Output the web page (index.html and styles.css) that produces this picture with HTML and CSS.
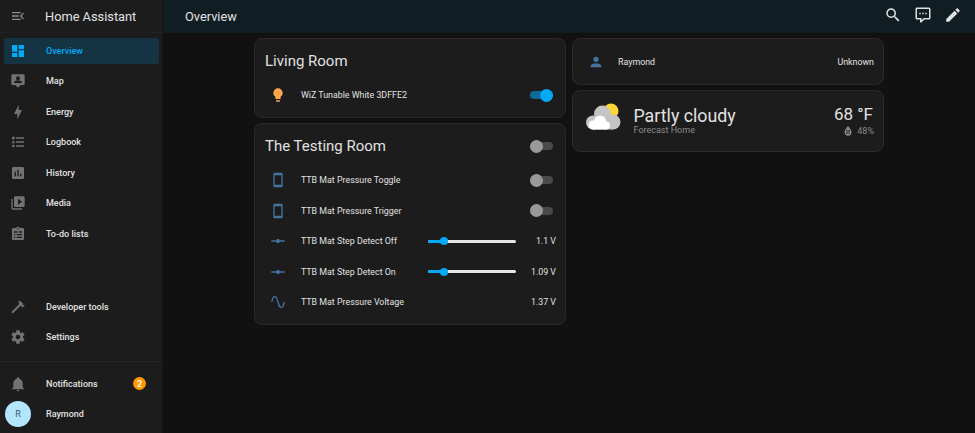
FILE: index.html
```html
<!DOCTYPE html>
<html lang="en">
  <head>
    <meta charset="UTF-8" />
    <title>Overview - Home Assistant</title>
    <link rel="stylesheet" href="styles.css">
  </head>
  <body>
    <aside class="sidebar">
      <div class="brand">
        <svg class="icon" viewBox="0 0 24 24"><path d="M21,15.61L19.59,17L14.58,12L19.59,7L21,8.39L17.44,12L21,15.61M3,6H16V8H3V6M3,13V11H13V13H3M3,18V16H16V18H3Z"/></svg>
        <span class="brand-name">Home Assistant</span>
      </div>
      <nav class="nav-main">
        <a class="nav-item active"><svg class="icon" viewBox="0 0 24 24"><path d="M13,3V9H21V3M13,21H21V11H13M3,21H11V15H3M3,13H11V3H3V13Z"/></svg><span>Overview</span></a>
        <a class="nav-item"><svg class="icon" viewBox="0 0 24 24"><path d="M20 2H4C2.9 2 2 2.9 2 4V16C2 17.1 2.9 18 4 18H8L12 22L16 18H20C21.1 18 22 17.1 22 16V4C22 2.9 21.1 2 20 2M12 5C13.66 5 15 6.34 15 8C15 9.66 13.66 11 12 11C10.34 11 9 9.66 9 8C9 6.34 10.34 5 12 5M18 15H6V14C6 12 10 10.9 12 10.9C14 10.9 18 12 18 14V15Z"/></svg><span>Map</span></a>
        <a class="nav-item"><svg class="icon" viewBox="0 0 24 24"><path d="M11 15H6L13 1V9H18L11 23V15Z"/></svg><span>Energy</span></a>
        <a class="nav-item"><svg class="icon" viewBox="0 0 24 24"><path d="M5,9.5L7.5,14H2.5L5,9.5M3,4H7V8H3V4M5,20A2,2 0 0,0 7,18A2,2 0 0,0 5,16A2,2 0 0,0 3,18A2,2 0 0,0 5,20M9,5V7H21V5H9M9,19H21V17H9V19M9,13H21V11H9V13Z"/></svg><span>Logbook</span></a>
        <a class="nav-item"><svg class="icon" viewBox="0 0 24 24"><path d="M9 17H7V10H9V17M13 17H11V7H13V17M17 17H15V13H17V17M19 3H5C3.9 3 3 3.9 3 5V19C3 20.1 3.9 21 5 21H19C20.1 21 21 20.1 21 19V5C21 3.9 20.1 3 19 3Z"/></svg><span>History</span></a>
        <a class="nav-item"><svg class="icon" viewBox="0 0 24 24"><path d="M4,6H2V20A2,2 0 0,0 4,22H18V20H4V6M20,2H8A2,2 0 0,0 6,4V16A2,2 0 0,0 8,18H20A2,2 0 0,0 22,16V4A2,2 0 0,0 20,2M12,14.5V5.5L18,10L12,14.5Z"/></svg><span>Media</span></a>
        <a class="nav-item"><svg class="icon" viewBox="0 0 24 24"><path fill-rule="evenodd" d="M19,3H14.82C14.4,1.84 13.3,1 12,1C10.7,1 9.6,1.84 9.18,3H5A2,2 0 0,0 3,5V19A2,2 0 0,0 5,21H19A2,2 0 0,0 21,19V5A2,2 0 0,0 19,3M12,3A1,1 0 0,1 13,4A1,1 0 0,1 12,5A1,1 0 0,1 11,4A1,1 0 0,1 12,3M6,8V10H11V8H6M13,8V10H18V8H13M6,12V14H8V12H6M10,12V14H18V12H10M6,16V18H8V16H6M10,16V18H18V16H10Z"/></svg><span>To-do lists</span></a>
      </nav>
      <nav class="nav-tools">
        <a class="nav-item"><svg class="icon" viewBox="0 0 24 24"><path d="M2 19.63L13.43 8.2L12.72 7.5L14.14 6.07L12 3.89C13.2 2.7 15.09 2.7 16.27 3.89L19.87 7.5L18.45 8.91H21.29L22 9.62L18.45 13.21L17.74 12.5V9.62L16.27 11.04L15.56 10.33L4.13 21.76L2 19.63Z"/></svg><span>Developer tools</span></a>
        <a class="nav-item"><svg class="icon" viewBox="0 0 24 24"><path d="M12,15.5A3.5,3.5 0 0,1 8.5,12A3.5,3.5 0 0,1 12,8.5A3.5,3.5 0 0,1 15.5,12A3.5,3.5 0 0,1 12,15.5M19.43,12.97C19.47,12.65 19.5,12.33 19.5,12C19.5,11.67 19.47,11.34 19.43,11L21.54,9.37C21.73,9.22 21.78,8.95 21.66,8.73L19.66,5.27C19.54,5.05 19.27,4.96 19.05,5.05L16.56,6.05C16.04,5.66 15.5,5.32 14.87,5.07L14.5,2.42C14.46,2.18 14.25,2 14,2H10C9.75,2 9.54,2.18 9.5,2.42L9.13,5.07C8.5,5.32 7.96,5.66 7.44,6.05L4.95,5.05C4.73,4.96 4.46,5.05 4.34,5.27L2.34,8.73C2.21,8.95 2.27,9.22 2.46,9.37L4.57,11C4.53,11.34 4.5,11.67 4.5,12C4.5,12.33 4.53,12.65 4.57,12.97L2.46,14.63C2.27,14.78 2.21,15.05 2.34,15.27L4.34,18.73C4.46,18.95 4.73,19.03 4.95,18.95L7.44,17.94C7.96,18.34 8.5,18.68 9.13,18.93L9.5,21.58C9.54,21.82 9.75,22 10,22H14C14.25,22 14.46,21.82 14.5,21.58L14.87,18.93C15.5,18.67 16.04,18.34 16.56,17.94L19.05,18.95C19.27,19.03 19.54,18.95 19.66,18.73L21.66,15.27C21.78,15.05 21.73,14.78 21.54,14.63L19.43,12.97Z"/></svg><span>Settings</span></a>
      </nav>
      <div class="nav-bottom">
        <a class="nav-item"><svg class="icon" viewBox="0 0 24 24"><path d="M21,19V20H3V19L5,17V11C5,7.9 7.03,5.17 10,4.29C10,4.19 10,4.1 10,4A2,2 0 0,1 12,2A2,2 0 0,1 14,4C14,4.1 14,4.19 14,4.29C16.97,5.17 19,7.9 19,11V17L21,19M14,21A2,2 0 0,1 12,23A2,2 0 0,1 10,21"/></svg><span>Notifications</span><b class="badge">2</b></a>
        <a class="nav-item user"><i class="avatar">R</i><span>Raymond</span></a>
      </div>
    </aside>

    <div class="content">
      <header class="topbar">
        <h1>Overview</h1>
        <div class="actions">
          <svg class="icon" viewBox="0 0 24 24"><path d="M9.5,3A6.5,6.5 0 0,1 16,9.5C16,11.11 15.41,12.59 14.44,13.73L14.71,14H15.5L20.5,19L19,20.5L14,15.5V14.71L13.73,14.44C12.59,15.41 11.11,16 9.5,16A6.5,6.5 0 0,1 3,9.5A6.5,6.5 0 0,1 9.5,3M9.5,5C7,5 5,7 5,9.5C5,12 7,14 9.5,14C12,14 14,12 14,9.5C14,7 12,5 9.5,5Z"/></svg>
          <svg class="icon" viewBox="0 0 24 24"><path d="M9,22A1,1 0 0,1 8,21V18H4A2,2 0 0,1 2,16V4C2,2.89 2.9,2 4,2H20A2,2 0 0,1 22,4V16A2,2 0 0,1 20,18H13.9L10.2,21.71C10,21.9 9.75,22 9.5,22V22H9M10,16V19.08L13.08,16H20V4H4V16H10M17,11H15V9H17V11M13,11H11V9H13V11M9,11H7V9H9V11Z"/></svg>
          <svg class="icon" viewBox="0 0 24 24"><path d="M20.71,7.04C21.1,6.65 21.1,6 20.71,5.63L18.37,3.29C18,2.9 17.35,2.9 16.96,3.29L15.12,5.12L18.87,8.87M3,17.25V21H6.75L17.81,9.93L14.06,6.18L3,17.25Z"/></svg>
        </div>
      </header>

      <main class="board">
        <div class="column">
          <section class="card">
            <div class="card-title"><h2>Living Room</h2></div>
            <div class="row">
              <svg class="icon light" viewBox="0 0 24 24"><path d="M12,2A7,7 0 0,0 5,9C5,11.38 6.19,13.47 8,14.74V17A1,1 0 0,0 9,18H15A1,1 0 0,0 16,17V14.74C17.81,13.47 19,11.38 19,9A7,7 0 0,0 12,2M9,21A1,1 0 0,0 10,22H14A1,1 0 0,0 15,21V20H9V21Z"/></svg>
              <span class="row-name">WiZ Tunable White 3DFFE2</span>
              <div class="switch on"><i></i></div>
            </div>
          </section>
          <section class="card">
            <div class="card-title">
              <h2>The Testing Room</h2>
              <div class="switch"><i></i></div>
            </div>
            <div class="row">
              <svg class="icon" viewBox="0 0 24 24"><path d="M17,19H7V5H17M17,1H7C5.89,1 5,1.89 5,3V21A2,2 0 0,0 7,23H17A2,2 0 0,0 19,21V3C19,1.89 18.1,1 17,1Z"/></svg>
              <span class="row-name">TTB Mat Pressure Toggle</span>
              <div class="switch"><i></i></div>
            </div>
            <div class="row">
              <svg class="icon" viewBox="0 0 24 24"><path d="M17,19H7V5H17M17,1H7C5.89,1 5,1.89 5,3V21A2,2 0 0,0 7,23H17A2,2 0 0,0 19,21V3C19,1.89 18.1,1 17,1Z"/></svg>
              <span class="row-name">TTB Mat Pressure Trigger</span>
              <div class="switch"><i></i></div>
            </div>
            <div class="row">
              <svg class="icon" viewBox="0 0 24 24"><path d="M2 11H9.17C9.58 9.83 10.69 9 12 9S14.42 9.83 14.83 11H22V13H14.83C14.42 14.17 13.31 15 12 15S9.58 14.17 9.17 13H2V11Z"/></svg>
              <span class="row-name">TTB Mat Step Detect Off</span>
              <div class="slider"><u style="width: 16px"></u><i></i></div>
              <span class="row-value">1.1 V</span>
            </div>
            <div class="row">
              <svg class="icon" viewBox="0 0 24 24"><path d="M2 11H9.17C9.58 9.83 10.69 9 12 9S14.42 9.83 14.83 11H22V13H14.83C14.42 14.17 13.31 15 12 15S9.58 14.17 9.17 13H2V11Z"/></svg>
              <span class="row-name">TTB Mat Step Detect On</span>
              <div class="slider"><u style="width: 15.5px"></u><i></i></div>
              <span class="row-value">1.09 V</span>
            </div>
            <div class="row">
              <svg class="icon" viewBox="0 0 24 24"><path d="M16.5,21C13.5,21 12.31,16.76 11.05,12.28C10.14,9.04 9,5 7.5,5C4.11,5 4,11.93 4,12H2C2,11.63 2.06,3 7.5,3C10.5,3 11.71,7.25 12.97,11.74C13.83,14.8 15,19 16.5,19C19.94,19 20.03,12.07 20.03,12H22.03C22.03,12.37 21.97,21 16.5,21Z"/></svg>
              <span class="row-name">TTB Mat Pressure Voltage</span>
              <span class="row-value">1.37 V</span>
            </div>
          </section>
        </div>

        <div class="column">
          <section class="card card-person">
            <div class="row">
              <svg class="icon" viewBox="0 0 24 24"><path d="M12,4A4,4 0 0,1 16,8A4,4 0 0,1 12,12A4,4 0 0,1 8,8A4,4 0 0,1 12,4M12,14C16.42,14 20,15.79 20,18V20H4V18C4,15.79 7.58,14 12,14Z"/></svg>
              <span class="row-name">Raymond</span>
              <span class="row-value">Unknown</span>
            </div>
          </section>
          <section class="card card-weather">
            <svg class="weather-art" viewBox="0 0 35 27">
              <circle cx="25" cy="8" r="7.5" fill="#fdd835"/>
              <g fill="#c4c4c4">
                <circle cx="7" cy="19.5" r="7"/>
                <circle cx="16.5" cy="11" r="8.5"/>
                <circle cx="27" cy="19" r="7.5"/>
                <rect x="7" y="16" width="20" height="10.5"/>
              </g>
              <g fill="#ffffff">
                <circle cx="7" cy="22" r="4.5"/>
                <circle cx="14" cy="18.5" r="6"/>
                <circle cx="20" cy="22.5" r="4"/>
                <rect x="7" y="21" width="13" height="5.5"/>
              </g>
            </svg>
            <div class="weather-main">
              <div class="weather-state">Partly cloudy</div>
              <div class="weather-name">Forecast Home</div>
            </div>
            <div class="weather-side">
              <div class="weather-temp">68 °F</div>
              <div class="weather-hum">
                <svg class="icon" viewBox="0 0 24 24"><path d="M12,3.25C12,3.25 6,10 6,14C6,17.32 8.69,20 12,20A6,6 0 0,0 18,14C18,10 12,3.25 12,3.25M14.47,9.97L15.53,11.03L9.53,17.03L8.47,15.97M9.75,10A1.25,1.25 0 0,1 11,11.25A1.25,1.25 0 0,1 9.75,12.5A1.25,1.25 0 0,1 8.5,11.25A1.25,1.25 0 0,1 9.75,10M14.25,14.5A1.25,1.25 0 0,1 15.5,15.75A1.25,1.25 0 0,1 14.25,17A1.25,1.25 0 0,1 13,15.75A1.25,1.25 0 0,1 14.25,14.5Z"/></svg>
                <span>48%</span>
              </div>
            </div>
          </section>
        </div>
      </main>
    </div>
  </body>
</html>
```

FILE: styles.css
```css
* {
  box-sizing: border-box;
}

html,
body {
  height: 100%;
}

body {
  display: flex;
  margin: 0;
  overflow: hidden;
  background: #111111;
  color: #e1e1e1;
  font-family: Roboto, "Liberation Sans", sans-serif;
  font-size: 9px;
}

h1,
h2 {
  margin: 0;
  font-weight: 400;
}

.icon {
  display: block;
  flex: none;
  width: 18px;
  height: 18px;
  fill: currentColor;
}

/* sidebar */
.sidebar {
  display: flex;
  flex-direction: column;
  flex: none;
  width: 163px;
  background: #1c1c1c;
  border-right: 1px solid #161616;
}

.brand {
  display: flex;
  align-items: center;
  flex: none;
  height: 33px;
  padding-left: 10px;
  color: #8c8c8c;
  border-bottom: 1px solid #222222;
}

.brand .icon {
  width: 16px;
  height: 16px;
}

.brand-name {
  margin-left: 19px;
  color: #e1e1e1;
  font-size: 12.8px;
}

.nav-main {
  display: flex;
  flex-direction: column;
  flex: 1;
  padding-top: 5px;
}

.nav-tools {
  display: flex;
  flex-direction: column;
  padding-bottom: 6px;
  border-bottom: 1px solid #252525;
}

.nav-bottom {
  display: flex;
  flex-direction: column;
  padding: 9px 0 6.5px;
}

.nav-item {
  display: flex;
  align-items: center;
  flex: none;
  height: 25.5px;
  margin: 0 3px 5px 4px;
  padding-left: 6px;
  border-radius: 3px;
  color: #e1e1e1;
  font-weight: 500;
}

.nav-item .icon {
  width: 16px;
  height: 16px;
  margin-right: 20px;
  color: #727272;
}

.nav-item.active {
  background: #143444;
  color: #03a9f4;
}

.nav-item.active .icon {
  color: #03a9f4;
}

.nav-bottom .nav-item {
  margin-bottom: 4.5px;
}

.badge {
  display: flex;
  align-items: center;
  justify-content: center;
  width: 13px;
  height: 13px;
  margin-left: auto;
  margin-right: 13px;
  border-radius: 50%;
  background: #ff9800;
  color: #ffffff;
  font-size: 9px;
  font-weight: 500;
}

.nav-bottom .user {
  margin-bottom: 0;
  padding-left: 1px;
}

.avatar {
  display: flex;
  align-items: center;
  justify-content: center;
  width: 26px;
  height: 26px;
  margin-right: 15px;
  border-radius: 50%;
  background: #b3e5fc;
  color: #3d5a68;
  font-style: normal;
  font-weight: 400;
}

/* top bar */
.content {
  display: flex;
  flex-direction: column;
  flex: 1;
  min-width: 0;
}

.topbar {
  display: flex;
  align-items: center;
  justify-content: space-between;
  flex: none;
  height: 33px;
  padding: 0 13px 0 22px;
  background: #101e24;
  color: #e1e1e1;
}

.topbar h1 {
  font-size: 12.8px;
}

.actions {
  display: flex;
  gap: 12px;
  margin-top: -3px;
}

/* cards */
.board {
  display: grid;
  grid-template-columns: 312px 312px;
  justify-content: center;
  align-items: start;
  gap: 6px;
  padding-top: 5px;
}

.column {
  display: flex;
  flex-direction: column;
  gap: 5px;
}

.card {
  padding: 0 9px 6.5px 10px;
  background: #1c1c1c;
  border: 1px solid #2a2a2a;
  border-radius: 8px;
}

.card-title {
  display: flex;
  align-items: center;
  justify-content: space-between;
  height: 41px;
  padding-top: 3px;
}

.card-title h2 {
  font-size: 15px;
}

.row {
  display: flex;
  align-items: center;
  height: 30.5px;
  color: #e1e1e1;
  font-size: 8.85px;
}

.row .icon {
  width: 16px;
  height: 16px;
  margin-left: 4.5px;
  margin-right: 15.5px;
  color: #44739e;
}

.row .icon.light {
  color: #ffa64d;
}

.row-name {
  flex: 1;
}

.row-value {
  text-align: right;
}

.slider + .row-value {
  width: 38px;
}

.card-person {
  height: 47px;
  padding-bottom: 0;
}

.card-person .row {
  height: 45px;
}

.card-person .row-name {
  margin-left: -1px;
}

/* switch */
.switch {
  display: flex;
  align-items: center;
  flex: none;
  width: 23px;
  height: 8px;
  margin-right: 3px;
  border-radius: 4px;
  background: #4a4a4a;
}

.switch i {
  width: 13px;
  height: 13px;
  border-radius: 50%;
  background: #999999;
}

.switch.on {
  justify-content: flex-end;
  background: #0d6a96;
}

.switch.on i {
  background: #03a9f4;
}

/* slider */
.slider {
  display: flex;
  align-items: center;
  flex: none;
  width: 88px;
  height: 3px;
  margin-right: 2px;
  border-radius: 2px;
  background: #e8e4ea;
}

.slider u {
  height: 3px;
  border-radius: 2px 0 0 2px;
  background: #03a9f4;
}

.slider i {
  width: 8px;
  height: 8px;
  margin-left: -4px;
  border-radius: 50%;
  background: #03a9f4;
}

/* weather */
.card-weather {
  display: flex;
  align-items: center;
  height: 62px;
  padding: 0 10px 0 12.5px;
}

.weather-art {
  flex: none;
  width: 35px;
  height: 27px;
  margin-right: 13px;
  margin-bottom: 10px;
}

.weather-main {
  flex: 1;
}

.weather-state {
  font-size: 17.8px;
  line-height: 20px;
}

.weather-name {
  margin-top: -1px;
  color: #8a8a8a;
  line-height: 11px;
}

.weather-side {
  text-align: right;
}

.weather-temp {
  font-size: 17px;
  line-height: 20px;
}

.weather-hum {
  display: flex;
  align-items: center;
  justify-content: flex-end;
  margin-right: -1px;
  color: #8a8a8a;
  line-height: 10px;
}

.weather-hum .icon {
  width: 14px;
  height: 14px;
  margin-right: 2px;
}
```
